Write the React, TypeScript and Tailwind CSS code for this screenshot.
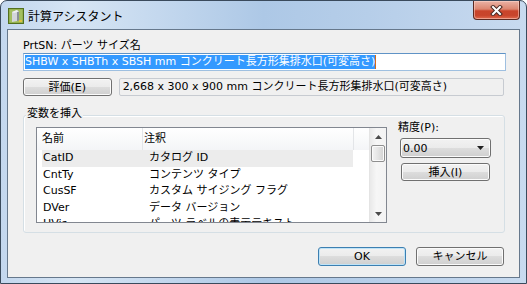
const FONT = "font-['DejaVu_Sans','Noto_Sans_CJK_JP',sans-serif]";

const btn =
  'flex items-center justify-center rounded-[3px] border border-[#707070] bg-[linear-gradient(#f2f2f2_0%,#ebebeb_50%,#dddddd_50%,#cfcfcf_100%)] shadow-[inset_0_0_0_1px_#fbfbfb] leading-none';

const rows: [string, string][] = [
  ['CatID', 'カタログ ID'],
  ['CntTy', 'コンテンツ タイプ'],
  ['CusSF', 'カスタム サイジング フラグ'],
  ['DVer', 'データ バージョン'],
  ['HVis', 'パーツ ラベルの表示テキスト'],
];

function AppIcon() {
  return (
    <svg width="16" height="16" viewBox="0 0 16 16">
      <rect x="0.5" y="0.5" width="15" height="15" fill="#86a443" stroke="#53701f" />
      <rect x="1.5" y="1.5" width="13" height="13" fill="#a3bf5f" />
      <polygon points="4,4 9,2 9,13 4,14" fill="#d3d6da" />
      <polygon points="9,2 11,3.5 11,12.5 9,13" fill="#8a9097" />
      <polygon points="4,4 9,2 11,3.5 6,5" fill="#eef0f2" />
      <rect x="11" y="12" width="3" height="2" fill="#e0c23c" />
    </svg>
  );
}

function CloseButton() {
  return (
    <div className="absolute right-[6px] top-0 flex h-[19px] w-[47px] items-center justify-center rounded-b-[4px] border border-t-0 border-[#5b2a22] bg-[linear-gradient(#eab3a6_0%,#dc8670_45%,#c9442b_55%,#c8452c_80%,#e06a4e_100%)] shadow-[inset_0_0_0_1px_rgba(255,220,210,0.5)]">
      <svg width="13" height="11" viewBox="0 0 13 11">
        <path d="M3 2 L10 9 M10 2 L3 9" stroke="#4a2a24" strokeWidth="4" strokeLinecap="square" />
        <path d="M3 2 L10 9 M10 2 L3 9" stroke="#ffffff" strokeWidth="2" strokeLinecap="square" />
      </svg>
    </div>
  );
}

function ScrollArrow({ up }: { up?: boolean }) {
  return (
    <div className="flex h-[17px] items-center justify-center">
      <svg width="7" height="4" viewBox="0 0 7 4">
        <polygon points={up ? '3.5,0 7,4 0,4' : '0,0 7,0 3.5,4'} fill="#4a4a4a" />
      </svg>
    </div>
  );
}

export default function App() {
  return (
    <div className={`h-[284px] w-[527px] text-[11px] text-black ${FONT}`}>
      <div className="flex h-full w-full flex-col rounded-t-[7px] border border-[#3a4a5c] bg-[linear-gradient(90deg,#c3d7ee_0%,#d6e5f4_14%,#c4d8ee_30%,#adc8e6_50%,#b6cee9_70%,#c8daef_100%)]">
        {/* title bar */}
        <div className="relative flex h-[28px] items-center pl-[7px]">
          <div className="mt-[2px]">
            <AppIcon />
          </div>
          <span className="ml-[4px] mt-[1px] font-['Noto_Sans_CJK_JP',sans-serif] text-[12px] leading-none">
            計算アシスタント
          </span>
          <CloseButton />
        </div>

        {/* client area */}
        <div className="mx-[6px] h-[249px] border border-[#66788c] bg-[#f0f0f0] px-[15px] pt-[9px]">
          <div className="h-[14px] leading-[14px]">PrtSN: パーツ サイズ名</div>
          <div className="flex h-[18px] w-[483px] items-center border border-[#9ebfe0] border-t-[#5f93c6] bg-white pl-[1px]">
            <span className="bg-[#3399ff] leading-[14px] text-white">
              SHBW x SHBTh x SBSH mm コンクリート長方形集排水口(可変高さ)
            </span>
            <span className="h-[14px] w-[1px] bg-[#d26a18]" />
          </div>

          <div className="mt-[7px] flex h-[18px]">
            <div className={`${btn} w-[89px]`}>評価(E)</div>
            <div className="ml-[7px] flex w-[387px] items-center rounded-[2px] border border-[#c7cbd1] bg-[#f0f0f0] pl-[3px]">
              2,668 x 300 x 900 mm コンクリート長方形集排水口(可変高さ)
            </div>
          </div>

          {/* group box */}
          <div className="relative mt-[19px] h-[118px] w-[482px] rounded-[3px] border border-[#d5dfe5] shadow-[inset_1px_1px_0_#ffffff]">
            <div className="absolute -top-[9px] left-[2px] bg-[#f0f0f0] px-[1px] leading-[14px]">変数を挿入</div>
            <div className="flex pl-[12px] pt-[5px]">
              <div className="mt-[6px] flex h-[96px] w-[351px] overflow-hidden border border-[#828790] bg-white">
                <div className="flex-1 overflow-hidden">
                  <div className="flex h-[22px] bg-[linear-gradient(#ffffff,#f4f5f7)]">
                    <div className="flex w-[105px] items-center pl-[5px]">名前</div>
                    <div className="w-px bg-[#e3e5e8]" />
                    <div className="flex w-[210px] items-center pl-[1px]">注釈</div>
                    <div className="w-px bg-[#e3e5e8]" />
                  </div>
                  <div className="ml-[5px] w-[311px]">
                    {rows.map(([name, note], i) => (
                      <div
                        key={name}
                        className={`flex h-[16.6px] items-center whitespace-nowrap ${i === 0 ? 'bg-[#ececec]' : ''}`}
                      >
                        <div className="w-[101px] pl-[1px]">{name}</div>
                        <div className="pl-[6px]">{note}</div>
                      </div>
                    ))}
                  </div>
                </div>
                <div className="flex w-[17px] flex-col border-l border-[#e4e4e4] bg-[linear-gradient(90deg,#e9e9e9,#f6f6f6_40%,#f3f3f3)]">
                  <ScrollArrow up />
                  <div className="mx-[1px] h-[17px] rounded-[2px] border border-[#8f8f8f] bg-[linear-gradient(90deg,#f4f4f4,#e4e4e4_50%,#d2d2d2)] shadow-[inset_0_0_0_1px_#fafafa]" />
                  <div className="flex-1" />
                  <ScrollArrow />
                </div>
              </div>

              <div className="ml-[11px] flex w-[93px] flex-col">
                <div className="h-[14px] leading-[14px]">精度(P):</div>
                <div className={`${btn} ml-[2px] mt-[3px] h-[20px] w-[91px] !justify-between pl-[2px] pr-[6px]`}>
                  <span>0.00</span>
                  <svg width="7" height="4" viewBox="0 0 7 4">
                    <polygon points="0,0 7,0 3.5,4" fill="#202020" />
                  </svg>
                </div>
                <div className={`${btn} ml-[3px] mt-[5px] h-[18px] w-[89px]`}>挿入(I)</div>
              </div>
            </div>
          </div>

          <div className="mt-[14px] flex justify-end gap-[10px]">
            <div className={`${btn} h-[19px] w-[88px] !border-[#3c7fb1] !shadow-[inset_0_0_0_1px_#bfe3f7]`}>OK</div>
            <div className={`${btn} h-[19px] w-[88px]`}>キャンセル</div>
          </div>
        </div>
      </div>
    </div>
  );
}
